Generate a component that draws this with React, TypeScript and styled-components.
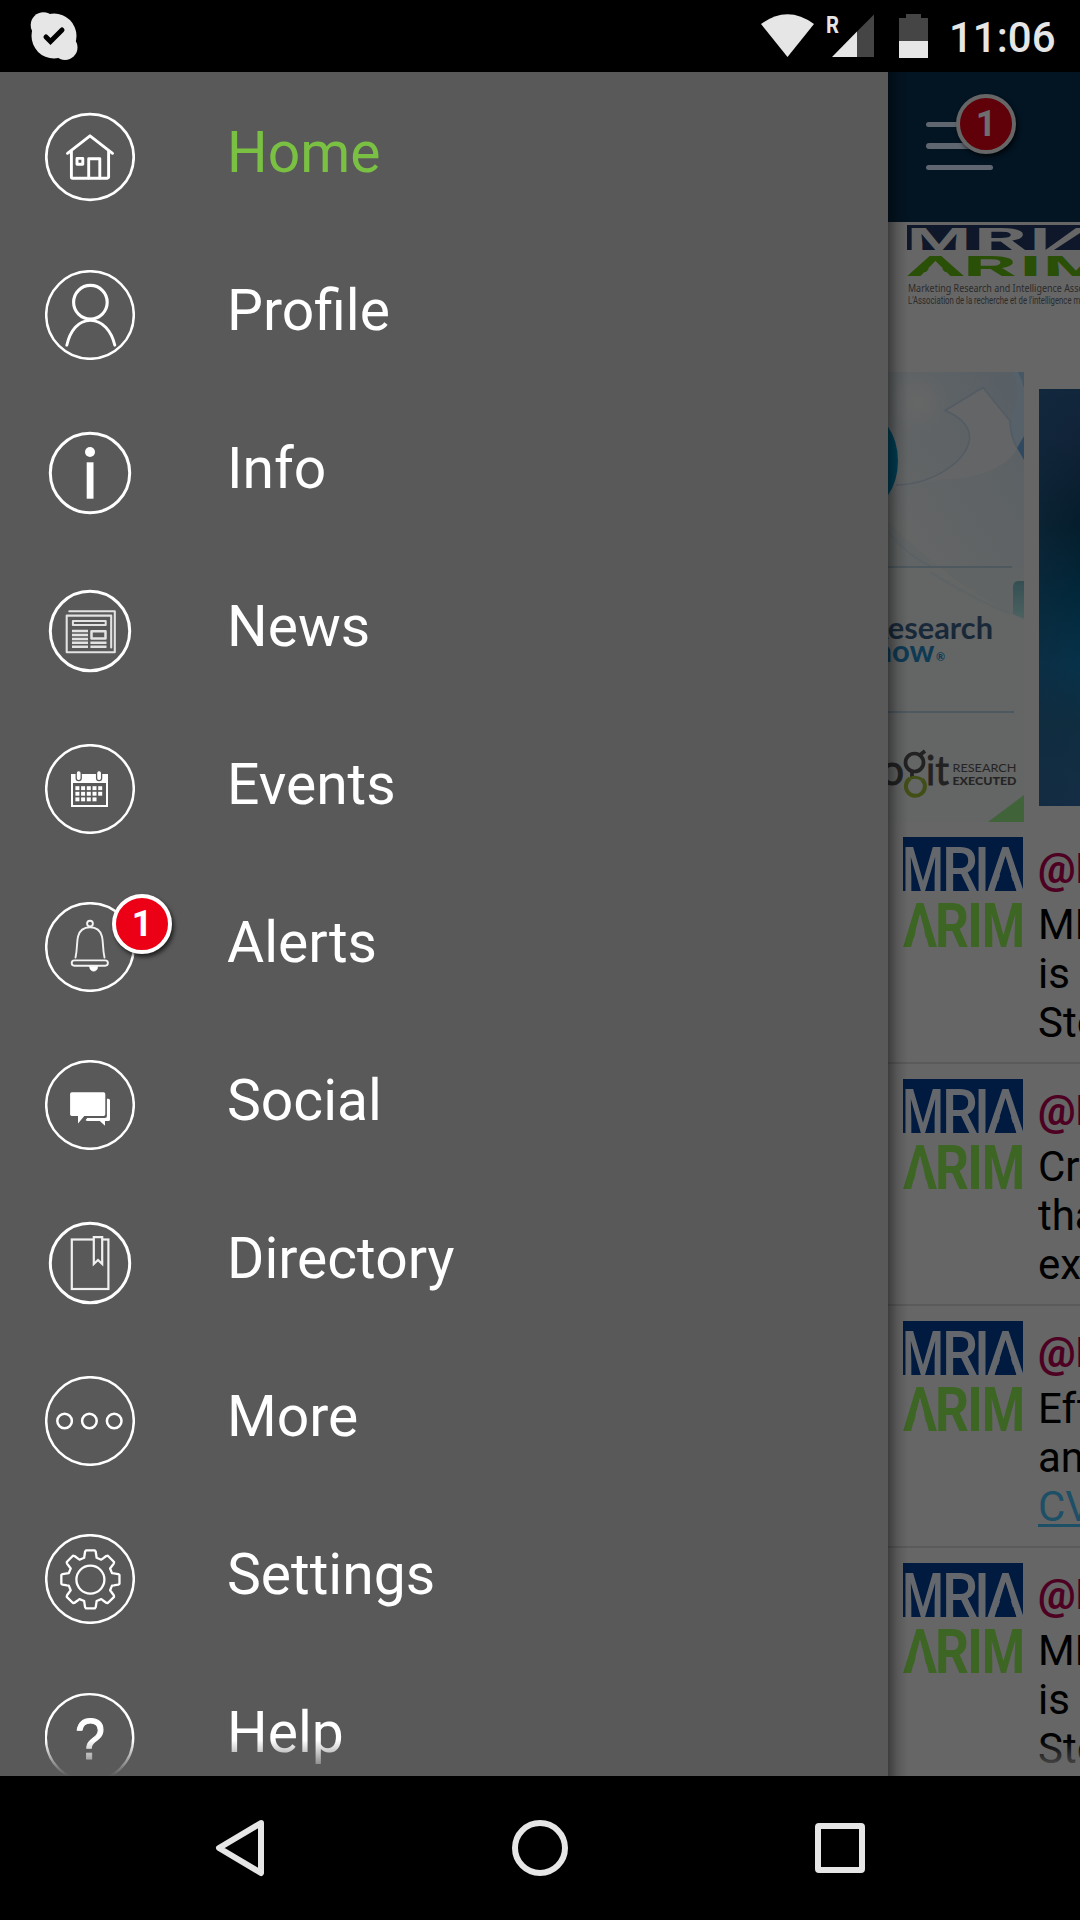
import React from "react";
import styled, { createGlobalStyle } from "styled-components";

const PANEL = "#595959";
const PAGE = "#666666";
const LIGHT = "#e6e6e6";

const GlobalStyle = createGlobalStyle`
  body { margin: 0; background: #000; }
  * { box-sizing: border-box; }
`;

const Screen = styled.div`
  width: 1080px;
  height: 1920px;
  display: flex;
  flex-direction: column;
  overflow: hidden;
  background: #000;
  font-family: Roboto, "Liberation Sans", sans-serif;
`;

const StatusBar = styled.header`
  height: 72px;
  flex: none;
  display: flex;
  align-items: center;
  justify-content: space-between;
  padding: 0 25px 0 30px;
`;

const StatusGroup = styled.div`
  display: flex;
  align-items: center;
`;

const Clock = styled.time`
  margin-left: 19px;
  width: 106px;
  padding-top: 3px;
  font-size: 42px;
  line-height: 74px;
  font-weight: 500;
  color: ${LIGHT};
  white-space: nowrap;
`;

const Body = styled.main`
  height: 1704px;
  flex: none;
  display: flex;
`;

const Drawer = styled.nav`
  position: relative;
  width: 888px;
  flex: none;
  padding-top: 6px;
  overflow: hidden;
  background: ${PANEL};
`;

const BottomFade = styled.div<{ $color: string }>`
  position: absolute;
  left: 0;
  right: 0;
  bottom: 0;
  height: 36px;
  background: linear-gradient(to top, ${(p) => p.$color}, ${(p) => p.$color}00);
`;

const MenuRow = styled.a`
  height: 158px;
  display: flex;
  align-items: center;
  padding-left: 45px;
`;

const IconSlot = styled.span`
  position: relative;
  display: flex;
  width: 90px;
  height: 90px;
  margin-right: 92px;
`;

const Label = styled.span<{ $active?: boolean }>`
  padding-bottom: 9px;
  font-size: 57px;
  line-height: 68px;
  color: ${(p) => (p.$active ? "#7ac143" : "#ffffff")};
`;

const Badge = styled.span<{ $dim?: boolean; $x: number; $y: number }>`
  position: absolute;
  left: ${(p) => p.$x}px;
  top: ${(p) => p.$y}px;
  width: 60px;
  height: 60px;
  border-radius: 50%;
  border: 4px solid ${(p) => (p.$dim ? "#666666" : "#ffffff")};
  background: ${(p) => (p.$dim ? "#600009" : "#ec0016")};
  box-shadow: 2px 3px 4px rgba(0, 0, 0, 0.65);
  color: ${(p) => (p.$dim ? "#6e6e6e" : "#ffffff")};
  font-size: 36px;
  font-weight: 700;
  line-height: 52px;
  text-align: center;
`;

const Page = styled.section`
  position: relative;
  width: 192px;
  flex: none;
  display: flex;
  flex-direction: column;
  overflow: hidden;
  background: ${PAGE};
`;

const DrawerShadow = styled.div`
  position: absolute;
  left: 0;
  top: 0;
  bottom: 0;
  width: 20px;
  background: linear-gradient(to right, rgba(0, 0, 0, 0.4), rgba(0, 0, 0, 0.13) 50%, rgba(0, 0, 0, 0));
`;

const AppBar = styled.div`
  position: relative;
  height: 150px;
  flex: none;
  padding: 50px 0 0 38px;
  background: #031422;
`;

const Burger = styled.div`
  width: 67px;
  display: flex;
  flex-direction: column;
  gap: 16px;
`;

const BurgerLine = styled.span`
  height: 5.4px;
  border-radius: 3px;
  background: #5f6670;
`;

const Brand = styled.div`
  height: 150px;
  flex: none;
  padding: 3px 0 0 19px;
`;

const Banners = styled.div`
  height: 450px;
  flex: none;
  display: flex;
  gap: 15px;
`;

const BlueBanner = styled.div`
  width: 60px;
  height: 417px;
  flex: none;
  margin-top: 17px;
  background:
    linear-gradient(to right, rgba(18, 42, 62, 0.45), rgba(0, 40, 65, 0) 80%),
    linear-gradient(to bottom, #11263c 0%, #112237 12%, #041c2a 32%, #00283a 50%, #06324a 66%, #0f2d40 80%, #152d45 100%);
`;

const Post = styled.article`
  height: 242px;
  flex: none;
  display: flex;
  gap: 15px;
  padding: 15px 0 0 15px;
  border-bottom: 2px solid #5a5a5a;
`;

const PostText = styled.div`
  width: 42px;
  flex: none;
  overflow: hidden;
  font-size: 42px;
  line-height: 49px;
  color: #000;
  white-space: nowrap;
`;

const Handle = styled.div`
  padding-top: 7px;
  height: 63px;
  line-height: 50px;
  font-weight: 700;
  color: #4d0022;
`;

const Line = styled.div``;

const LinkLine = styled.div`
  color: #1d4f66;
  text-decoration: underline;
  text-decoration-thickness: 3px;
  text-underline-offset: 3px;
`;

const NavBar = styled.footer`
  height: 144px;
  flex: none;
  display: flex;
  align-items: center;
  justify-content: space-between;
  padding: 0 210px 0 210px;
`;

const Ring = ({ r = 43.8, w = 2.5 }: { r?: number; w?: number }) => (
  <circle cx="45" cy="45" r={r} strokeWidth={w} />
);

const gearPath = (() => {
  const parts: string[] = [];
  for (let i = 0; i < 8; i++) {
    const mid = (i * Math.PI) / 4;
    const spots: [number, number][] = [
      [-0.28, 22.5],
      [-0.25, 24.2],
      [-0.19, 28.2],
      [-0.15, 29.4],
      [0.15, 29.4],
      [0.19, 28.2],
      [0.25, 24.2],
      [0.28, 22.5],
    ];
    for (const [a, r] of spots) {
      const x = 45.4 + r * Math.sin(mid + a);
      const y = 45.4 - r * Math.cos(mid + a);
      parts.push(`${parts.length ? "L" : "M"}${x.toFixed(2)} ${y.toFixed(2)}`);
    }
  }
  return parts.join(" ") + "Z";
})();

const icons: Record<string, React.ReactNode> = {
  Home: (
    <>
      <ellipse cx="45" cy="45" rx="43.7" ry="42.8" strokeWidth="2.7" />
      <g strokeWidth="2.9">
        <path d="M22.5 41.3 45 23.8 67.500 41.300" />
        <path d="M26.400 39.500V65a1.200 1.200 0 0 0 1.200 1.200H62.400A1.200 1.200 0 0 0 63.600 65V39.500" />
        <rect x="32" y="46.400" width="5.800" height="5.800" />
        <path d="M43.700 66V46.700H54.800V66" />
      </g>
    </>
  ),
  Profile: (
    <>
      <Ring />
      <circle cx="45.400" cy="32.200" r="16.800" strokeWidth="3.100" />
      <path d="M21.800 75.200C25 61 33 50.400 45.300 50.400S66.500 61 69.800 75.200" strokeWidth="2.900" />
    </>
  ),
  Info: (
    <>
      <Ring r={39.700} w={3} />
      <circle cx="45" cy="24" r="5" fill="#fff" stroke="none" />
      <rect x="41.700" y="34.300" width="6.800" height="36.400" fill="#fff" stroke="none" />
    </>
  ),
  News: (
    <>
      <Ring r={39.700} w={3} />
      <g stroke="#e2e2e2">
        <path d="M24.300 25.300H69.800V66.200H21.700V29.600H66.200V61.500" strokeWidth="2.100" />
        <rect x="27.900" y="35" width="32.800" height="4" strokeWidth="2" />
        <rect x="46.500" y="45.300" width="14" height="7.200" strokeWidth="2.500" />
        <path
          d="M27 45H43M27 49H43M27 52.900H43M27 56.800H43M27 60.800H43M45.400 56.800H61.500M45.400 60.800H61.500"
          strokeWidth="2.500"
          strokeLinecap="butt"
        />
      </g>
    </>
  ),
  Events: (
    <>
      <Ring />
      <rect x="27" y="31" width="35" height="31" strokeWidth="2" strokeLinejoin="miter" />
      <rect x="26" y="30" width="37" height="9" fill="#fff" stroke="none" />
      <g fill="#fff" stroke={PANEL} strokeWidth="1.300">
        <rect x="31.200" y="26.600" width="5" height="10" rx="2.300" />
        <rect x="51.600" y="26.600" width="5" height="10" rx="2.300" />
      </g>
      <g fill="#fff" stroke="none">
        {[0, 1, 2].map((row) =>
          Array.from({ length: row === 2 ? 4 : 5 }, (_, col) => (
            <rect key={`${row}-${col}`} x={30.400 + col * 5.700} y={42.200 + row * 5.600} width="4" height="3.900" />
          )),
        )}
      </g>
    </>
  ),
  Alerts: (
    <>
      <Ring />
      <g strokeWidth="1.900" stroke="#f2f2f2">
        <circle cx="45" cy="21.600" r="2.900" />
        <path d="M30.500 55.500C32.500 47 31.500 41 33 34.500C34.500 28.500 38.500 25.200 45 25.200S55.500 28.500 57 34.500C58.500 41 57.500 47 59.500 55.500" />
        <rect x="26.700" y="58.400" width="36.200" height="5.300" rx="2.600" />
      </g>
      <path d="M44.500 64.500H52.800A4.200 5.500 0 0 1 44.500 64.500Z" fill="#fff" strokeWidth=".6" />
    </>
  ),
  Social: (
    <>
      <Ring />
      <path
        d="M26.800 32.300H58.600a1.700 1.700 0 0 1 1.700 1.700V54.300a1.700 1.700 0 0 1-1.700 1.700H39.300L33 63.600V56H26.800a1.700 1.700 0 0 1-1.700-1.700V34a1.700 1.700 0 0 1 1.700-1.700Z"
        fill="#fff"
        stroke="none"
      />
      <path
        d="M61.900 38.700H63.400a1.600 1.600 0 0 1 1.600 1.600V59.400a1.600 1.600 0 0 1-1.600 1.600H60V65.700L54.800 61H42.300L40.500 60.200 42.200 57.900H60a1.900 1.900 0 0 0 1.900-1.900Z"
        fill="#fff"
        stroke="none"
      />
    </>
  ),
  Directory: (
    <>
      <Ring r={39.700} w={3} />
      <g strokeWidth="2.200" strokeLinejoin="miter" stroke="#f0f0f0">
        <rect x="26.800" y="21.500" width="36.600" height="49.500" />
        <path d="M48.800 19.200H57.200V46L53 42 48.800 46Z" fill={PANEL} />
      </g>
    </>
  ),
  More: (
    <>
      <Ring />
      <g strokeWidth="2.500">
        <circle cx="19.600" cy="45" r="7.300" />
        <circle cx="44.400" cy="45" r="7.300" />
        <circle cx="69.200" cy="45" r="7.300" />
      </g>
    </>
  ),
  Settings: (
    <>
      <Ring />
      <circle cx="45.400" cy="45.600" r="14" strokeWidth="2.300" />
      <path d={gearPath} strokeWidth="2.300" />
    </>
  ),
  Help: (
    <>
      <circle cx="44.500" cy="45.800" r="43.700" strokeWidth="2.400" />
      <text x="45" y="67" fontSize="58" textAnchor="middle" fill="#fff" strokeWidth="1" textLength="30" lengthAdjust="spacingAndGlyphs" fontFamily="'Liberation Sans', sans-serif">
        ?
      </text>
    </>
  ),
};

const MenuIcon = ({ name }: { name: string }) => (
  <svg
    width="90"
    height="90"
    viewBox="0 0 90 90"
    fill="none"
    stroke="#fff"
    strokeLinecap="round"
    strokeLinejoin="round"
    fontFamily="Roboto, sans-serif"
  >
    {icons[name]}
  </svg>
);

const glyph = (ch: string, x: number, y: number, w: number, fill: string) => (
  <text x={x} y={y} textLength={w} lengthAdjust="spacingAndGlyphs" fill={fill}>
    {ch}
  </text>
);

const BrandLogo = () => (
  <svg width="260" height="90" viewBox="0 0 260 90" fontFamily="Roboto, sans-serif">
    <rect width="260" height="25" fill="#0f182a" />
    <g fontSize="30.500" fontWeight="700">
      {glyph("M", 0, 25, 64, PAGE)}
      {glyph("R", 67, 25, 53, PAGE)}
      {glyph("I", 122, 25, 22, PAGE)}
      {glyph("A", 138, 25, 78, PAGE)}
    </g>
    <path d="M176 6 205 25H147Z" fill="#0f182a" />
    <g fontSize="28.500" fontWeight="700">
      {glyph("A", 0, 51, 57, "#2a4f06")}
      {glyph("R", 56, 51, 54, "#2a4f06")}
      {glyph("I", 112, 51, 23, "#2a4f06")}
      {glyph("M", 136, 51, 66, "#2a4f06")}
    </g>
    <path d="M28.500 36.500 42 51.500H15Z" fill={PAGE} />
    <text x="1" y="67" fontSize="10" fontFamily="'Noto Sans', sans-serif" fill="#2b2b2b" textLength="204" lengthAdjust="spacingAndGlyphs">
      Marketing Research and Intelligence Association
    </text>
    <text x="1" y="79" fontSize="10.500" fill="#2b2b2b" textLength="200" lengthAdjust="spacingAndGlyphs">
      L'Association de la recherche et de l'intelligence marketing
    </text>
  </svg>
);

const TileLogo = () => (
  <svg width="120" height="120" viewBox="0 0 120 120" fontFamily="Roboto, sans-serif" style={{ flex: "none" }}>
    <rect width="120" height="54" fill="#011a3f" />
    <g fontSize="60.500" fontWeight="500">
      {glyph("M", -1, 53.500, 42, "#64686d")}
      {glyph("R", 39, 53.500, 36, "#64686d")}
      {glyph("I", 71, 53.500, 16, "#64686d")}
      {glyph("A", 84, 53.500, 37, "#64686d")}
    </g>
    <path d="M102.500 21 113 54H92Z" fill="#011a3f" />
    <g fontSize="62" fontWeight="700">
      {glyph("A", 0, 110, 34, "#3d6523")}
      {glyph("R", 32, 110, 34, "#3d6523")}
      {glyph("I", 64, 110, 16, "#3d6523")}
      {glyph("M", 79, 110, 43, "#3d6523")}
    </g>
    <path d="M17 77 25.500 111H8.500Z" fill={PAGE} />
  </svg>
);

const SponsorBanner = () => (
  <svg width="136" height="450" viewBox="0 0 136 450" style={{ flex: "none" }}>
    <defs>
      <linearGradient id="sky" x1="0" y1="1" x2="1" y2="0">
        <stop offset="0" stopColor="#656666" />
        <stop offset=".55" stopColor="#5f6365" />
        <stop offset="1" stopColor="#575f65" />
      </linearGradient>
      <linearGradient id="ink" x1="0" y1="0" x2="0" y2="1">
        <stop offset="0" stopColor="#1c2c3d" />
        <stop offset="1" stopColor="#152636" />
      </linearGradient>
      <linearGradient id="teal" x1="0" y1="0" x2="0" y2="1">
        <stop offset="0" stopColor="#344f52" />
        <stop offset="1" stopColor="#4c6262" />
      </linearGradient>
      <radialGradient id="glow">
        <stop offset="0" stopColor="#666666" />
        <stop offset="1" stopColor="#666666" stopOpacity="0" />
      </radialGradient>
    </defs>
    <rect width="136" height="450" fill="#646565" />
    <rect width="136" height="196" fill="url(#sky)" />
    <circle cx="30" cy="30" r="32" fill="url(#glow)" />
    <path d="M0 150Q60 210 136 248V196H0Z" fill="#616464" />
    <path d="M124 0H136V84Q118 60 122 49Q135 25 124 0Z" fill="#56616a" />
    <path d="M130 0H136V16Q134 7 130 0Z" fill="#465766" />
    <path d="M136 64 129 76 136 88Z" fill="#2f4a60" />
    <path
      d="M8 113C50 112 84 84 81.500 63C80 51 70 44 57 38.500L95 15.500 122 49C122 60 125 69 129 76C122 94 90 108 50 108Z"
      fill="#646566"
    />
    <path
      d="M8 113C50 112 84 84 81.500 63C80 51 70 44 57 38.500L95 15.500 122 49C122 60 125 69 129 76"
      fill="none"
      stroke="#535b64"
      strokeWidth="1.500"
    />
    <ellipse cx="-27" cy="89" rx="37" ry="50" fill="#003f55" />
    <path d="M0 160Q20 184 42 194" fill="none" stroke="#596166" strokeWidth="1.300" />
    <path d="M42 200Q90 230 124 242" fill="none" stroke="#5e6466" strokeWidth="2" />
    <path d="M0 195H124M0 340H126" stroke="#47565e" strokeWidth="1.300" />
    <path d="M136 209H130Q125 209 125 216V242L136 247Z" fill="url(#teal)" />
    <g fontFamily="Lato, sans-serif" fontWeight="700">
      <text x="105" y="267" fontSize="30" textAnchor="end" fill="url(#ink)" textLength="124" lengthAdjust="spacingAndGlyphs">
        Research
      </text>
      <text x="46.500" y="289.500" fontSize="30" textAnchor="end" fill="#0e3a54" textLength="60" lengthAdjust="spacingAndGlyphs">
        now
      </text>
      <text x="48" y="289" fontSize="11" fill="#0e3a54">
        ®
      </text>
      <text x="16" y="413" fontSize="42" fontWeight="400" textAnchor="end" fill="#222" stroke="#222">
        lo
      </text>
      <text x="38" y="413" fontSize="40" fontWeight="400" fill="#222" stroke="#222" strokeWidth=".8" textLength="23" lengthAdjust="spacingAndGlyphs">
        it
      </text>
    </g>
    <circle cx="26.500" cy="390.500" r="9" fill="none" stroke="#222" strokeWidth="3.700" />
    <path d="M32 383 37 379M24 399V405" stroke="#222" strokeWidth="3.700" />
    <path d="M22 406.500A9.500 9.500 0 1 0 34 407.500" fill="none" stroke="#414f16" strokeWidth="4" />
    <path d="M22 406.500Q28 403.500 34 407.500" fill="none" stroke="#414f16" strokeWidth="3" />
    <g fontFamily="Lato, sans-serif" fontSize="11.800" fill="#242424">
      <text x="64.500" y="399.700" textLength="64" lengthAdjust="spacingAndGlyphs">
        RESEARCH
      </text>
      <text x="64.500" y="413.200" fontWeight="900" textLength="64" lengthAdjust="spacingAndGlyphs">
        EXECUTED
      </text>
    </g>
    <path d="M100 450 136 423V450Z" fill="#41633a" />
  </svg>
);

const StatusIcons = () => (
  <svg width="170" height="72" viewBox="760 0 170 72" fill={LIGHT}>
    <path d="M761 24Q787.500 4.500 814 24L787.500 57Z" />
    <text
      x="826"
      y="33"
      fontSize="24"
      fontWeight="700"
      fontFamily="Roboto, sans-serif"
      textLength="13"
      lengthAdjust="spacingAndGlyphs"
    >
      R
    </text>
    <path d="M857 31.500 874 14.500V57H857Z" fill="#454545" />
    <path d="M832 57 857 31.500V57Z" />
    <path d="M906 14H921V18H928V41H899V18H906Z" fill="#454545" />
    <path d="M899 41H928V58H899Z" />
  </svg>
);

const menu: { name: string; active?: boolean; badge?: string }[] = [
  { name: "Home", active: true },
  { name: "Profile" },
  { name: "Info" },
  { name: "News" },
  { name: "Events" },
  { name: "Alerts", badge: "1" },
  { name: "Social" },
  { name: "Directory" },
  { name: "More" },
  { name: "Settings" },
  { name: "Help" },
];

const posts: { lines: string[]; link?: string }[] = [
  { lines: ["MRIA", "is", "Ste"] },
  { lines: ["Cre", "that", "exp"] },
  { lines: ["Eff", "and"], link: "CVC" },
  { lines: ["MRIA", "is", "Ste"] },
];

export default function App() {
  return (
    <Screen>
      <GlobalStyle />
      <StatusBar>
        <svg width="48" height="50" viewBox="30 11 48 50">
          <g fill={LIGHT}>
            <circle cx="54" cy="36" r="22.500" />
            <circle cx="43.500" cy="25" r="12.800" />
            <circle cx="65" cy="47.500" r="12.500" />
          </g>
          <path d="M46 37 50.500 41.500 62 30" fill="none" stroke="#000" strokeWidth="5" strokeLinecap="round" />
        </svg>
        <StatusGroup>
          <StatusIcons />
          <Clock>11:06</Clock>
        </StatusGroup>
      </StatusBar>
      <Body>
        <Drawer>
          {menu.map((item) => (
            <MenuRow key={item.name}>
              <IconSlot>
                <MenuIcon name={item.name} />
                {item.badge && (
                  <Badge $x={67} $y={-8}>
                    {item.badge}
                  </Badge>
                )}
              </IconSlot>
              <Label $active={item.active}>{item.name}</Label>
            </MenuRow>
          ))}
          <BottomFade $color={PANEL} />
        </Drawer>
        <Page>
          <AppBar>
            <Burger>
              <BurgerLine />
              <BurgerLine />
              <BurgerLine />
            </Burger>
            <Badge $dim $x={68} $y={22}>
              1
            </Badge>
          </AppBar>
          <Brand>
            <BrandLogo />
          </Brand>
          <Banners>
            <SponsorBanner />
            <BlueBanner />
          </Banners>
          {posts.map((post, i) => (
            <Post key={i}>
              <TileLogo />
              <PostText>
                <Handle>@MRIA</Handle>
                {post.lines.map((line) => (
                  <Line key={line}>{line}</Line>
                ))}
                {post.link && <LinkLine>{post.link}</LinkLine>}
              </PostText>
            </Post>
          ))}
          <BottomFade $color={PAGE} />
          <DrawerShadow />
        </Page>
      </Body>
      <NavBar>
        <svg width="60" height="60" viewBox="210 1818 60 60">
          <path d="M261 1823 219 1848 261 1873Z" fill="none" stroke={LIGHT} strokeWidth="6" strokeLinejoin="round" />
        </svg>
        <svg width="60" height="60" viewBox="0 0 60 60">
          <circle cx="30" cy="30" r="25" fill="none" stroke={LIGHT} strokeWidth="6" />
        </svg>
        <svg width="60" height="60" viewBox="0 0 60 60">
          <rect x="8" y="8" width="44" height="44" rx="1" fill="none" stroke={LIGHT} strokeWidth="6" strokeLinejoin="round" />
        </svg>
      </NavBar>
    </Screen>
  );
}
